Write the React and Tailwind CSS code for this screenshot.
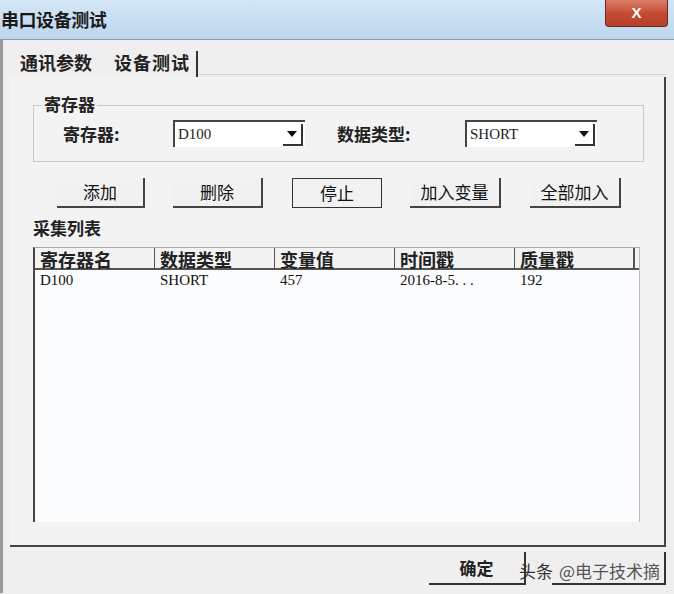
const font = { fontFamily: '"Noto Sans CJK SC", "Liberation Sans", sans-serif' };
const serif = { fontFamily: '"Liberation Serif", serif' };

const Btn = ({ label, focused, className = '' }) => (
  <div
    className={`flex h-[30px] items-center justify-center text-[17px] text-[#111] ${
      focused
        ? 'border border-[#333] bg-[#f2f2f2]'
        : 'border-r-2 border-b-2 border-r-[#444] border-b-[#444] bg-[#f1f1f1]'
    } ${className}`}
  >
    {label}
  </div>
);

const Combo = ({ value }) => (
  <div className="flex h-[27px] w-[132px] items-center border-t-2 border-l-2 border-t-[#444] border-l-[#444] bg-white pl-[3px]">
    <span className="flex-1 text-[15px] text-[#222]" style={serif}>
      {value}
    </span>
    <div className="mr-[2px] flex h-[22px] w-[20px] items-center justify-center border-r-2 border-b-2 border-r-[#333] border-b-[#333]">
      <svg width="10" height="6" viewBox="0 0 10 6">
        <path d="M0 0 L10 0 L5 6 Z" fill="#111" />
      </svg>
    </div>
  </div>
);

const columns = ['寄存器名', '数据类型', '变量值', '时间戳', '质量戳'];
const row = ['D100', 'SHORT', '457', '2016-8-5. . .', '192'];

export default function App() {
  return (
    <div className="h-[594px] w-[674px] overflow-hidden bg-[#efefef]" style={font}>
      {/* title bar */}
      <div className="relative flex h-[40px] items-center border-b border-[#8a9aa8] bg-gradient-to-b from-[#d4e6f6] to-[#bcd6ee] pl-[1px]">
        <span className="text-[18px] font-bold tracking-tight text-[#1a1a1a]">串口设备测试</span>
        <div className="absolute right-[6px] top-0 flex h-[27px] w-[63px] items-center justify-center rounded-b-[4px] border border-t-0 border-[#6b2a1e] bg-gradient-to-b from-[#d9806a] via-[#c54b33] to-[#b3412c]">
          <span className="text-[15px] font-bold text-white" style={{ fontFamily: '"Liberation Sans", sans-serif' }}>
            X
          </span>
        </div>
      </div>

      {/* body */}
      <div className="flex h-[553px] border-l-[3px] border-l-[#9a9a9a]">
        <div className="flex flex-1 flex-col pl-[7px] pr-[8px]">
          {/* tabs */}
          <div className="flex h-[37px] items-end">
            <span className="mb-[1px] ml-[10px] text-[18px] font-bold text-[#222]">通讯参数</span>
            <span className="mb-[1px] ml-[22px] text-[18px] font-bold tracking-[1px] text-[#222]">设备测试</span>
            <div className="mb-0 ml-[6px] h-[26px] w-[2px] bg-[#333]" />
            <div className="mb-[2px] h-[1px] flex-1 bg-[#d2d2d2]" />
          </div>

          {/* tab panel */}
          <div className="flex h-[470px] flex-col border-r-2 border-b-2 border-r-[#444] border-b-[#444] bg-[#f3f3f3] pl-[23px] pr-[20px]">
            {/* group box */}
            <div className="relative mt-[28px] flex h-[57px] items-center border border-[#c9c9c9]">
              <span className="absolute -top-[15px] left-[8px] bg-[#f3f3f3] px-[2px] text-[17px] font-bold text-[#222]">
                寄存器
              </span>
              <span className="ml-[29px] w-[110px] text-[17px] font-bold text-[#222]">寄存器:</span>
              <Combo value="D100" />
              <span className="ml-[32px] w-[128px] text-[17px] font-bold text-[#222]">数据类型:</span>
              <Combo value="SHORT" />
            </div>

            {/* buttons */}
            <div className="mt-[16px] flex">
              <Btn label="添加" className="ml-[24px] w-[88px]" />
              <Btn label="删除" className="ml-[28px] w-[90px]" />
              <Btn label="停止" focused className="ml-[29px] w-[90px]" />
              <Btn label="加入变量" className="ml-[28px] w-[91px]" />
              <Btn label="全部加入" className="ml-[29px] w-[91px]" />
            </div>

            <span className="mt-[8px] text-[17px] font-bold leading-[24px] text-[#222]">采集列表</span>

            {/* list */}
            <div className="mt-[7px] flex h-[275px] w-[607px] flex-col border-l-2 border-t border-r border-l-[#444] border-t-[#aaa] border-r-[#bbb] bg-[#fbfcfe]">
              <div className="flex h-[22px] border-b-2 border-[#555] bg-[#f3f3f3]">
                {columns.map((c, i) => (
                  <div
                    key={c}
                    className={`flex items-end pl-[5px] text-[18px] font-bold leading-none text-[#222] ${
                      i < 4 ? 'w-[120px] border-r border-[#555]' : 'w-[120px] border-r-2 border-[#555]'
                    }`}
                  >
                    {c}
                  </div>
                ))}
              </div>
              <div className="flex h-[20px] items-center">
                {row.map((v) => (
                  <div key={v} className="w-[120px] pl-[5px] text-[15px] text-[#111]" style={serif}>
                    {v}
                  </div>
                ))}
              </div>
            </div>
          </div>

          {/* footer */}
          <div className="relative flex h-[46px] items-start justify-end pt-[5px]">
            <div className="flex h-[33px] w-[97px] items-center justify-center border-r-2 border-b-2 border-r-[#333] border-b-[#333] text-[17px] font-bold text-[#222]">
              确定
            </div>
            <div className="ml-[26px] h-[33px] w-[114px] border-r-2 border-b-2 border-r-[#333] border-b-[#333]" />
            <div className="absolute right-[4px] top-[11px] flex items-center gap-[6px] px-[2px] text-[17px] text-[#333]">
              <span>头条</span>
              <span className="text-[#555]">@电子技术摘</span>
            </div>
          </div>
        </div>
      </div>
    </div>
  );
}
